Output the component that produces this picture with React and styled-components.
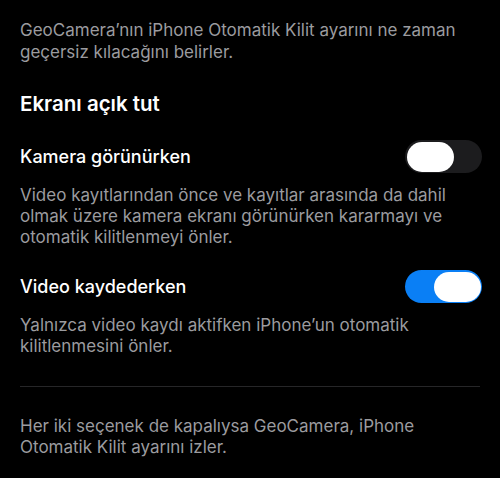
import styled, { createGlobalStyle } from 'styled-components';

const GlobalStyle = createGlobalStyle`
    html, body {
        margin: 0;
        padding: 0;
        background: #000;
    }
    body {
        font-family: Inter, "Noto Sans", sans-serif;
        -webkit-font-smoothing: antialiased;
    }
`;

const Page = styled.div`
    width: 500px;
    height: 478px;
    box-sizing: border-box;
    padding: 19px 18px 0 20px;
    background: #000;
    color: #fff;
    overflow: hidden;
`;

const Note = styled.p`
    margin: ${(p) => p.$top || 0}px 0 0 0;
    font-size: 17px;
    line-height: ${(p) => p.$lh || 22}px;
    color: #9b9b9f;
    padding-right: ${(p) => p.$pr || 0}px;
`;

const Heading = styled.h2`
    margin: 28px 0 0 0;
    font-size: 20.5px;
    line-height: 26px;
    font-weight: 600;
`;

const Row = styled.div`
    display: flex;
    align-items: center;
    justify-content: space-between;
    margin-top: ${(p) => p.$top}px;
    height: 33px;
`;

const RowTitle = styled.span`
    font-size: 18px;
    font-weight: 500;
`;

const Track = styled.div`
    width: 77px;
    height: 33px;
    box-sizing: border-box;
    padding: 1.5px;
    border-radius: 17px;
    display: flex;
    justify-content: ${(p) => (p.$on ? 'flex-end' : 'flex-start')};
    background: ${(p) => (p.$on ? '#0a7ff5' : '#1c1c1e')};
`;

const Thumb = styled.div`
    width: 47px;
    height: 30px;
    border-radius: 15px;
    background: #fff;
`;

const Divider = styled.hr`
    margin: 29px 2px 0 0;
    border: 0;
    height: 1px;
    background: #262628;
`;

const Toggle = ({ on }) => (
    <Track $on={on}>
        <Thumb />
    </Track>
);

export default function App() {
    return (
        <>
            <GlobalStyle />
            <Page>
                <Note>GeoCamera’nın iPhone Otomatik Kilit ayarını ne zaman geçersiz kılacağını belirler.</Note>
                <Heading>Ekranı açık tut</Heading>
                <Row $top={23}>
                    <RowTitle>Kamera görünürken</RowTitle>
                    <Toggle on={false} />
                </Row>
                <Note $top={12} $lh={21} $pr={20}>
                    Video kayıtlarından önce ve kayıtlar arasında da dahil olmak üzere kamera ekranı görünürken kararmayı ve otomatik kilitlenmeyi önler.
                </Note>
                <Row $top={22}>
                    <RowTitle>Video kaydederken</RowTitle>
                    <Toggle on />
                </Row>
                <Note $top={12} $lh={21} $pr={20}>
                    Yalnızca video kaydı aktifken iPhone’un otomatik kilitlenmesini önler.
                </Note>
                <Divider />
                <Note $top={29} $lh={21} $pr={20}>
                    Her iki seçenek de kapalıysa GeoCamera, iPhone Otomatik Kilit ayarını izler.
                </Note>
            </Page>
        </>
    );
}
